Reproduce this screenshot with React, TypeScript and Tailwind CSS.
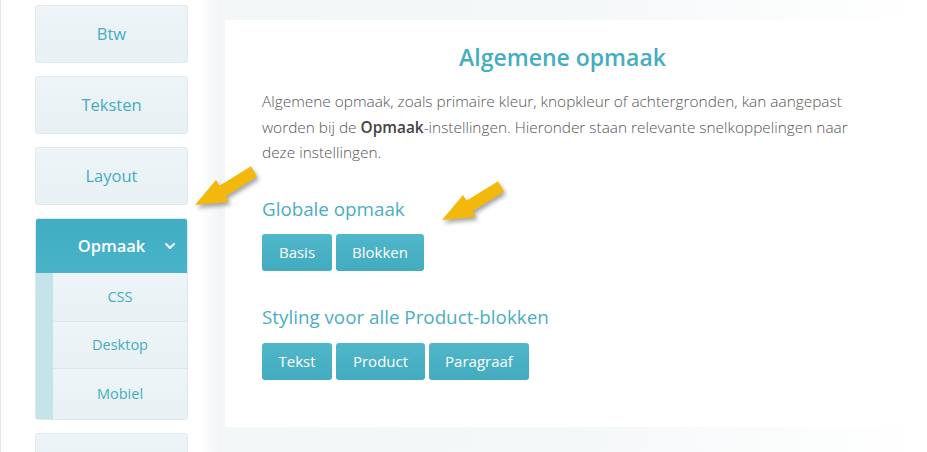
import { ChevronDown } from "lucide-react";

const topItems = ["Btw", "Teksten", "Layout"];
const subItems = [
  { label: "CSS", h: "h-[48px]" },
  { label: "Desktop", h: "h-[47px]" },
  { label: "Mobiel", h: "h-[51px]" },
];

function Arrow({ className }: { className: string }) {
  return (
    <svg
      className={`pointer-events-none absolute ${className}`}
      width="76"
      height="56"
      viewBox="0 0 76 56"
      style={{ filter: "drop-shadow(2px 3px 2px rgba(0,0,0,0.35))" }}
    >
      <polygon
        points="4,44 38,41 34.5,35.2 66,15.7 60,5.3 28.5,24.8 25,19"
        fill="#f2b90c"
      />
    </svg>
  );
}

function SideButton({ label }: { label: string }) {
  return (
    <div className="flex h-[58px] shrink-0 items-center justify-center rounded-[3px] border border-[#dfe9ee] bg-gradient-to-b from-[#eef4f7] to-[#e8f1f4] text-[16.5px] text-[#44adc2]">
      {label}
    </div>
  );
}

function Btn({ label, w }: { label: string; w: string }) {
  return (
    <div
      className={`flex h-[37px] ${w} items-center justify-center rounded-[3px] bg-gradient-to-b from-[#51b7ca] to-[#42abc0] text-[15px] text-white`}
    >
      {label}
    </div>
  );
}

export default function App() {
  return (
    <div
      className="relative flex h-[452px] w-[927px] overflow-hidden bg-white"
      style={{ fontFamily: '"Open Sans", sans-serif' }}
    >
      {/* sidebar */}
      <aside className="flex w-[222px] shrink-0 flex-col gap-[13px] border-l border-[#e6eaec] bg-gradient-to-r from-white from-90% to-[#f1f4f6] pl-[34px] pr-[34px] pt-[5px]">
        {topItems.map((t) => (
          <SideButton key={t} label={t} />
        ))}

        <div className="shrink-0 overflow-hidden rounded-[3px] border border-[#dbe8ec]">
          <div className="relative flex h-[54px] items-center justify-center bg-gradient-to-b from-[#40adc3] to-[#49b4c8] text-[16.5px] font-semibold text-white">
            Opmaak
            <ChevronDown
              className="absolute right-[9px] top-1/2 -translate-y-1/2"
              size={16}
              strokeWidth={3}
            />
          </div>
          {subItems.map((s, i) => (
            <div key={s.label} className={`flex ${s.h}`}>
              <div className="w-[17px] shrink-0 bg-[#c5e4e9]" />
              <div
                className={`flex flex-1 items-center justify-center bg-gradient-to-b from-[#eef4f7] to-[#e9f1f4] text-[14.5px] text-[#44adc2] ${
                  i > 0 ? "border-t border-[#dde8ec]" : ""
                }`}
              >
                {s.label}
              </div>
            </div>
          ))}
        </div>

        <div className="h-[40px] shrink-0 rounded-[3px] border border-[#dfe9ee] bg-gradient-to-b from-[#eef4f7] to-[#e8f1f4]" />
      </aside>

      {/* main */}
      <main className="flex-1 bg-gradient-to-r from-[#f4f7f8] via-[#f5f8f9] to-white pl-[3px] pt-[20px]">
        <section className="h-[407px] w-[675px] bg-white px-[37px] pt-[22px]">
          <h1 className="text-center text-[23px] font-semibold leading-[30px] text-[#44adc2]">
            Algemene opmaak
          </h1>
          <p className="mt-[17px] text-[15.4px] font-light leading-[25.5px] text-[#555]">
            Algemene opmaak, zoals primaire kleur, knopkleur of achtergronden, kan aangepast
            worden bij de <span className="font-semibold text-[#444]">Opmaak</span>
            -instellingen. Hieronder staan relevante snelkoppelingen naar deze instellingen.
          </p>

          <h2 className="mt-[31px] text-[18.8px] leading-[24px] text-[#4aaec2]">Globale opmaak</h2>
          <div className="mt-[13px] flex gap-[4px]">
            <Btn label="Basis" w="w-[70px]" />
            <Btn label="Blokken" w="w-[88px]" />
          </div>

          <h2 className="mt-[34px] text-[18.8px] leading-[24px] text-[#4aaec2]">
            Styling voor alle Product-blokken
          </h2>
          <div className="mt-[14px] flex gap-[4px]">
            <Btn label="Tekst" w="w-[70px]" />
            <Btn label="Product" w="w-[89px]" />
            <Btn label="Paragraaf" w="w-[100px]" />
          </div>
        </section>
      </main>

      <Arrow className="left-[191px] top-[161px]" />
      <Arrow className="left-[438px] top-[176px]" />
    </div>
  );
}
